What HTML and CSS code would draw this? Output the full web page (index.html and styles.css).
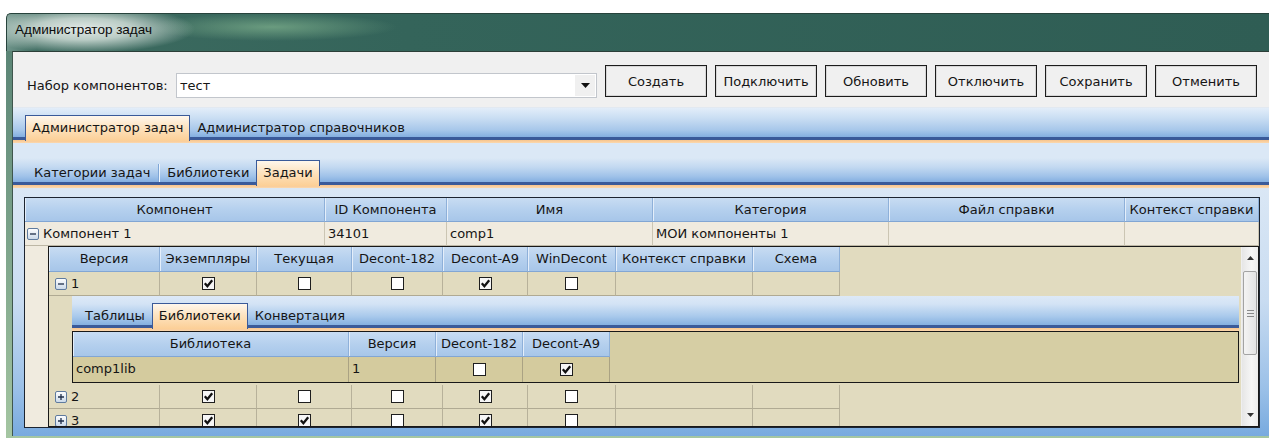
FILE: index.html
```html
<!DOCTYPE html>
<html lang="ru">
<head>
<meta charset="utf-8">
<title>Администратор задач</title>
<link rel="stylesheet" href="styles.css">
</head>
<body>
<svg class="defs" width="0" height="0" aria-hidden="true">
  <defs>
    <linearGradient id="exp-fill" x1="0" y1="0" x2="0" y2="1">
      <stop offset="0" stop-color="#ffffff"/>
      <stop offset="1" stop-color="#c9d8e8"/>
    </linearGradient>
  </defs>
  <symbol id="cb-off" viewBox="0 0 13 13">
    <rect x="0.5" y="0.5" width="12" height="12" fill="#ffffff" stroke="#1e1e1e"/>
  </symbol>
  <symbol id="cb-on" viewBox="0 0 13 13">
    <rect x="0.5" y="0.5" width="12" height="12" fill="#f6f6f6" stroke="#1e1e1e"/>
    <path d="M2.8 6.2 L5.4 9.3 L10.2 3.3" fill="none" stroke="#111" stroke-width="2.3"/>
  </symbol>
  <symbol id="exp-minus" viewBox="0 0 12 12">
    <rect x="0.5" y="0.5" width="11" height="11" rx="1.5" fill="url(#exp-fill)" stroke="#5f7b9e"/>
    <path d="M3 6h6" stroke="#1f2f4a" stroke-width="1.3"/>
  </symbol>
  <symbol id="exp-plus" viewBox="0 0 12 12">
    <rect x="0.5" y="0.5" width="11" height="11" rx="1.5" fill="url(#exp-fill)" stroke="#5f7b9e"/>
    <path d="M3 6h6M6 3v6" stroke="#1f2f4a" stroke-width="1.3"/>
  </symbol>
</svg>

<div class="window">
  <div class="titlebar"><span class="title">Администратор задач</span></div>
  <div class="frame">
    <div class="client">

      <div class="toolbar">
        <span class="set-label">Набор компонентов:</span>
        <div class="combo">
          <span class="combo-text">тест</span>
          <span class="combo-btn"><svg width="9" height="5" viewBox="0 0 9 5"><path d="M0 0h9L4.5 5z" fill="#111"/></svg></span>
        </div>
        <div class="actions">
          <button class="btn">Создать</button>
          <button class="btn">Подключить</button>
          <button class="btn">Обновить</button>
          <button class="btn">Отключить</button>
          <button class="btn">Сохранить</button>
          <button class="btn">Отменить</button>
        </div>
      </div>

      <div class="tabstrip main-tabs">
        <div class="tab active">Администратор задач</div>
        <div class="tab">Администратор справочников</div>
      </div>

      <div class="tabstrip sub-tabs">
        <div class="tab">Категории задач</div>
        <div class="tab-sep"></div>
        <div class="tab">Библиотеки</div>
        <div class="tab active">Задачи</div>
      </div>

      <div class="page">
        <div class="mgrid">
          <div class="mcols hdr">
            <div>Компонент</div>
            <div>ID Компонента</div>
            <div>Имя</div>
            <div>Категория</div>
            <div>Файл справки</div>
            <div>Контекст справки</div>
          </div>
          <div class="mcols mrow">
            <div class="tree"><svg class="exp"><use href="#exp-minus"/></svg>Компонент 1</div>
            <div>34101</div>
            <div>comp1</div>
            <div>МОИ компоненты 1</div>
            <div></div>
            <div></div>
          </div>

          <div class="mdetail">
            <div class="ngrid">
              <div class="nbody">
                <div class="ncols hdr">
                  <div>Версия</div>
                  <div>Экземпляры</div>
                  <div>Текущая</div>
                  <div>Decont-182</div>
                  <div>Decont-A9</div>
                  <div>WinDecont</div>
                  <div>Контекст справки</div>
                  <div>Схема</div>
                </div>

                <div class="ncols nrow">
                  <div class="tree"><svg class="exp"><use href="#exp-minus"/></svg>1</div>
                  <div class="chk"><svg class="cb"><use href="#cb-on"/></svg></div>
                  <div class="chk"><svg class="cb"><use href="#cb-off"/></svg></div>
                  <div class="chk"><svg class="cb"><use href="#cb-off"/></svg></div>
                  <div class="chk"><svg class="cb"><use href="#cb-on"/></svg></div>
                  <div class="chk"><svg class="cb"><use href="#cb-off"/></svg></div>
                  <div></div>
                  <div></div>
                </div>

                <div class="ndetail">
                  <div class="tabstrip inner-tabs">
                    <div class="tab">Таблицы</div>
                    <div class="tab active">Библиотеки</div>
                    <div class="tab">Конвертация</div>
                  </div>
                  <div class="igrid">
                    <div class="icols hdr">
                      <div>Библиотека</div>
                      <div>Версия</div>
                      <div>Decont-182</div>
                      <div>Decont-A9</div>
                    </div>
                    <div class="icols irow">
                      <div>comp1lib</div>
                      <div>1</div>
                      <div class="chk"><svg class="cb"><use href="#cb-off"/></svg></div>
                      <div class="chk"><svg class="cb"><use href="#cb-on"/></svg></div>
                    </div>
                  </div>
                </div>

                <div class="ncols nrow">
                  <div class="tree"><svg class="exp"><use href="#exp-plus"/></svg>2</div>
                  <div class="chk"><svg class="cb"><use href="#cb-on"/></svg></div>
                  <div class="chk"><svg class="cb"><use href="#cb-off"/></svg></div>
                  <div class="chk"><svg class="cb"><use href="#cb-off"/></svg></div>
                  <div class="chk"><svg class="cb"><use href="#cb-on"/></svg></div>
                  <div class="chk"><svg class="cb"><use href="#cb-off"/></svg></div>
                  <div></div>
                  <div></div>
                </div>

                <div class="ncols nrow">
                  <div class="tree"><svg class="exp"><use href="#exp-plus"/></svg>3</div>
                  <div class="chk"><svg class="cb"><use href="#cb-on"/></svg></div>
                  <div class="chk"><svg class="cb"><use href="#cb-on"/></svg></div>
                  <div class="chk"><svg class="cb"><use href="#cb-off"/></svg></div>
                  <div class="chk"><svg class="cb"><use href="#cb-on"/></svg></div>
                  <div class="chk"><svg class="cb"><use href="#cb-off"/></svg></div>
                  <div></div>
                  <div></div>
                </div>
              </div>

              <div class="vscroll">
                <div class="sb-btn"><svg width="7" height="4" viewBox="0 0 7 4"><path d="M0 4h7L3.5 0z" fill="#333"/></svg></div>
                <div class="sb-track">
                  <div class="sb-thumb"><span></span><span></span><span></span></div>
                </div>
                <div class="sb-btn"><svg width="7" height="4" viewBox="0 0 7 4"><path d="M0 0h7L3.5 4z" fill="#333"/></svg></div>
              </div>
            </div>
          </div>
        </div>
      </div>

    </div>
  </div>
</div>
</body>
</html>
```

FILE: styles.css
```css
* { box-sizing: border-box; }

html, body {
  margin: 0;
  padding: 0;
}

body {
  width: 1269px;
  height: 438px;
  overflow: hidden;
  background: #ffffff;
  font-family: "DejaVu Sans", "Liberation Sans", sans-serif;
  font-size: 13px;
  color: #151515;
}

.defs { position: absolute; width: 0; height: 0; }

/* ---------- window chrome ---------- */
.window {
  margin: 13px 0 0 6px;
  height: 425px;
  display: flex;
  flex-direction: column;
}

.titlebar {
  height: 38px;
  flex: none;
  padding-left: 8px;
  display: flex;
  align-items: center;
  border-top-left-radius: 5px;
  border-top: 1px solid #27433c;
  border-left: 1px solid #27433c;
  background:
    radial-gradient(ellipse 112px 24px at 76px 15px, rgba(232,238,236,0.97) 0%, rgba(204,218,212,0.88) 45%, rgba(70,110,98,0) 100%),
    radial-gradient(ellipse 125px 14px at 265px 13px, rgba(128,178,142,0.7) 0%, rgba(95,150,118,0) 100%),
    linear-gradient(to right, #6f948a 0, #3d6b60 30px, #34645a 400px, #2f5d54 100%);
}

.title {
  font-family: "Liberation Sans", "DejaVu Sans", sans-serif;
  font-size: 13.5px;
  color: #0b0b0b;
  margin-top: -6px;
}

.frame {
  flex: 1;
  display: flex;
  padding: 0 0 2px 6px;
  background: linear-gradient(to bottom, #5b8576 0%, #7da48b 50%, #a5c6a2 100%);
}

.client {
  flex: 1;
  display: flex;
  flex-direction: column;
  border-left: 1px solid #3f564d;
  border-top: 1px solid #2c3f39;
  background: #f0f0f0;
  overflow: hidden;
}

/* ---------- toolbar ---------- */
.toolbar {
  height: 56px;
  flex: none;
  display: flex;
  align-items: flex-start;
  padding: 13px 0 0 14px;
  border-bottom: 1px solid #e2e9f1;
}

.set-label {
  width: 149px;
  margin-top: 8px;
  line-height: 25px;
  white-space: nowrap;
}

.combo {
  width: 421px;
  height: 25px;
  margin-top: 8px;
  display: flex;
  align-items: stretch;
  background: #ffffff;
  border: 1px solid #c2c6cc;
}

.combo-text {
  flex: 1;
  padding-left: 3px;
  line-height: 23px;
}

.combo-btn {
  width: 20px;
  margin: 1px;
  display: flex;
  align-items: center;
  justify-content: center;
  background: #f0f0f0;
}

.actions {
  display: flex;
  gap: 8px;
  margin-left: 8px;
}

.btn {
  width: 102px;
  height: 32px;
  padding: 0;
  font: inherit;
  color: #151515;
  background: #f0f0f0;
  border: 1px solid #1c1c1c;
  box-shadow: inset 0 0 0 1px #d6d6d6;
  white-space: nowrap;
}

/* ---------- tab strips ---------- */
.tabstrip {
  flex: none;
  display: flex;
  align-items: flex-end;
  padding-bottom: 3px;
}

.main-tabs {
  height: 35px;
  padding-left: 12px;
  background: linear-gradient(to bottom,
    #e3edf9 0, #cadef3 10px, #a7c7ea 22px, #83afe0 29px,
    #3a5a99 29px, #3a5a99 32px,
    #f7c48d 32px, #fbd8ae 35px);
}

.sub-tabs {
  height: 45px;
  padding-left: 14px;
  background: linear-gradient(to bottom,
    #dbe8f6 0, #dbe8f6 15px, #c3d9f1 24px, #a1c3e9 33px, #84afe0 39px,
    #3a5a99 39px, #3a5a99 42px,
    #f7c48d 42px, #fbd8ae 45px);
}

.inner-tabs {
  height: 35px;
  padding-left: 6px;
  margin-right: 2px;
  background: linear-gradient(to bottom,
    #dde9f7 0, #d3e3f5 8px, #aacaec 20px, #85b0e0 29px,
    #3a5a99 29px, #3a5a99 32px,
    #f7c48d 32px, #fbd8ae 35px);
}

.tab {
  height: 25px;
  line-height: 24px;
  padding: 0 6px;
  border: 1px solid transparent;
  border-bottom: none;
  white-space: nowrap;
  color: #151515;
}

.tab.active {
  border-color: #3a5a99;
  background: linear-gradient(to bottom, #fff7ec 0%, #fde3c0 45%, #fccf96 100%);
  margin-bottom: -1px;
  height: 26px;
}

.tab-sep {
  width: 1px;
  height: 18px;
  margin: 0 1px 3px;
  background: #7fa6d6;
  box-shadow: 1px 0 #eef5fc;
}

/* ---------- page ---------- */
.page {
  flex: 1;
  padding: 9px 0 0 11px;
  background: linear-gradient(to bottom, #dae7f5 0%, #c9dcf1 45%, #9cc1e8 80%, #78aadf 100%);
}

/* shared header cell look */
.hdr > div {
  height: 24px;
  line-height: 23px;
  text-align: center;
  white-space: nowrap;
  overflow: hidden;
  border-right: 1px solid #8eb0d9;
  border-bottom: 1px solid #82a6d3;
  box-shadow: inset 1px 0 #e4eefa;
  background: linear-gradient(to bottom, #c8dcf2 0%, #b5d0ee 50%, #a7c6e9 100%);
}

.tree {
  display: flex;
  align-items: center;
  gap: 4px;
}

.exp {
  width: 12px;
  height: 12px;
  flex: none;
}

.chk {
  display: flex;
  align-items: center;
  justify-content: center;
}

.cb {
  width: 13px;
  height: 13px;
}

/* ---------- master grid ---------- */
.mgrid {
  width: 1236px;
  height: 231px;
  overflow: hidden;
  border: 1px solid #1c2430;
  background: #f0ebdf;
}

.mcols {
  display: grid;
  grid-template-columns: 300px 122px 206px 236px 236px 134px;
}

.mrow > div {
  height: 24px;
  line-height: 23px;
  padding-left: 3px;
  white-space: nowrap;
  overflow: hidden;
  border-right: 1px solid #cbc5b3;
  border-bottom: 1px solid #bdb7a5;
}

.mrow > .tree { padding-left: 2px; }

.mdetail {
  padding-left: 23px;
}

/* ---------- nested versions grid ---------- */
.ngrid {
  height: 181px;
  display: flex;
  border: 1px solid #181818;
}

.nbody {
  flex: 1;
  overflow: hidden;
  background: #e1dbbf;
}

.ncols {
  display: grid;
  grid-template-columns: 111px 97px 95px 91px 85px 88px 137px 87px;
  width: 791px;
}

.ncols.hdr > div { height: 25px; line-height: 24px; }

.nrow > div {
  height: 24px;
  line-height: 23px;
  padding-left: 3px;
  white-space: nowrap;
  border-right: 1px solid #b7b19a;
  border-bottom: 1px solid #b0aa93;
}

.nrow > .tree { padding-left: 6px; }
.nrow > .chk { padding-left: 0; }

.ndetail {
  padding: 0 0 2px 23px;
}

/* ---------- inner libraries grid ---------- */
.igrid {
  margin-right: 2px;
  border: 1px solid #181818;
  background: #d6cea4;
}

.icols {
  display: grid;
  grid-template-columns: 276px 87px 87px 87px;
  width: 537px;
}

.icols.hdr > div { height: 25px; line-height: 24px; }

.irow > div {
  height: 25px;
  line-height: 24px;
  padding-left: 3px;
  white-space: nowrap;
  border-right: 1px solid #aaa283;
  background: #d4cb9e;
}

.irow > .chk { padding-left: 0; }

/* ---------- vertical scrollbar ---------- */
.vscroll {
  width: 17px;
  flex: none;
  display: flex;
  flex-direction: column;
  background: linear-gradient(to right, #e6e6e6, #f6f6f6 60%, #ececec);
  border-left: 1px solid #efefef;
}

.sb-btn {
  height: 22px;
  flex: none;
  display: flex;
  align-items: center;
  justify-content: center;
}

.sb-track {
  flex: 1;
  padding: 2px 1px 0;
}

.sb-thumb {
  height: 84px;
  border: 1px solid #a3a3a3;
  border-radius: 2px;
  background: linear-gradient(to right, #f4f4f4, #e3e3e3);
  display: flex;
  flex-direction: column;
  align-items: center;
  justify-content: center;
  gap: 2px;
}

.sb-thumb span {
  width: 7px;
  height: 1px;
  background: #8a8a8a;
}
```
